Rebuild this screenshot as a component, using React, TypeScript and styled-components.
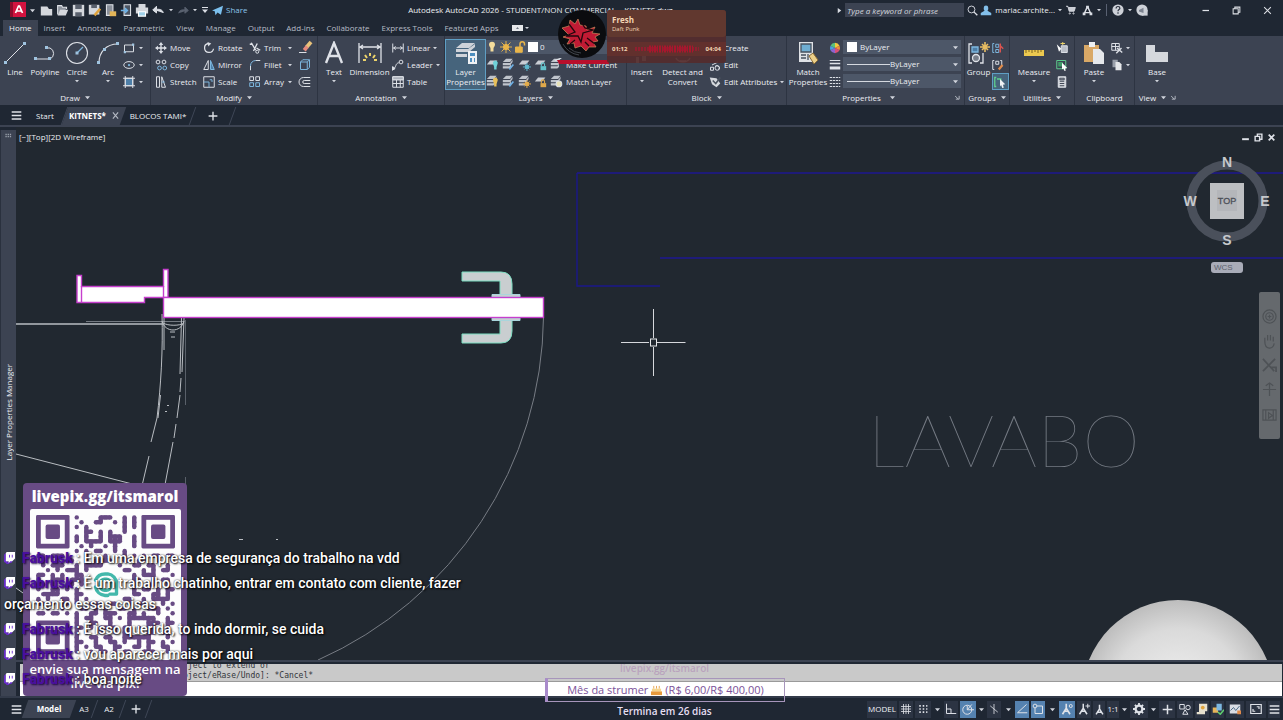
import React from 'react';
import styled, { createGlobalStyle, css } from 'styled-components';

const UI = '"Open Sans", "Noto Sans", sans-serif';
const C = {
  frame: '#1f2733',
  panel: '#3c4352',
  canvas: '#212830',
  field: '#4d5768',
  text: '#eceef2',
  dim: '#b7bcc6',
  blue: '#7db8e0',
  active: '#5582b0',
};

const Global = createGlobalStyle`
  *, *::before, *::after { box-sizing: border-box; }
  body { margin: 0; background: ${C.frame}; }
  button, input, select { font: inherit; color: inherit; border: 0; background: none; padding: 0; margin: 0; }
  svg { display: block; flex: none; }
`;

/* ---------- icons ---------- */

type IconProps = { size?: number; children: React.ReactNode; color?: string; box?: number };
const Icon = ({ size = 12, box = 16, color = '#dfe2e8', children }: IconProps) => (
  <svg width={size} height={size} viewBox={`0 0 ${box} ${box}`} fill="none" stroke={color} strokeWidth={1.3} aria-hidden="true">
    {children}
  </svg>
);

const Caret = ({ size = 5 }: { size?: number }) => (
  <svg width={size} height={size} viewBox="0 0 6 6" aria-hidden="true">
    <path d="M0 1.5h6L3 5z" fill="#d0d4dc" />
  </svg>
);

const Launcher = () => (
  <svg width="5" height="5" viewBox="0 0 6 6" fill="none" stroke="#c5cad3" aria-hidden="true">
    <path d="M0 1l4 4M5 1v4H1" />
  </svg>
);

const LayerIcon = ({ badge }: { badge: React.ReactNode }) => (
  <Icon size={13}>
    <path d="M5 3h9l-4 5H1z" fill="#c9cdd4" stroke="none" />
    {badge}
  </Icon>
);
const StackIcon = ({ badge }: { badge: React.ReactNode }) => (
  <Icon size={13}>
    <path d="M5 1h8l-3 4H1zM1 6h9l3-4v3l-3 4H1zM1 10h8l2-2v3l-2 2H1z" fill="#bfc4cc" stroke="none" />
    {badge}
  </Icon>
);
const bulb = (c: string) => <path d="M9 8a3 3 0 1 1 5 0l-1 3v3h-3v-3z" fill={c} stroke="none" />;
const wand = (c: string) => <path d="M14 8l-5 6" stroke={c} strokeWidth="2" />;
const sunBadge = (c: string) => (
  <g stroke={c} strokeWidth="1.2">
    <circle cx="11" cy="11" r="2" fill={c} />
    <path d="M11 6v10M6 11h10M8 8l6 6M14 8l-6 6" />
  </g>
);
const lockBadge = (c: string) => (
  <g>
    <path d="M9 10V8a2 2 0 0 1 4 0v2" stroke={c} />
    <rect x="8" y="10" width="7" height="5" fill={c} stroke="none" />
  </g>
);

/* ---------- title bar ---------- */

const Page = styled.div`
  position: relative;
  display: flex;
  flex-direction: column;
  min-height: 100vh;
  overflow: hidden;
  background: ${C.frame};
  color: ${C.text};
  font: 8px/12px ${UI};
`;

const TitleBar = styled.header`
  display: flex;
  align-items: center;
  height: 20px;
`;

const QuickAccess = styled.div`
  display: flex;
  align-items: center;
  padding-left: 10px;
`;

const ToolCell = styled.button<{ $w?: number }>`
  display: flex;
  flex: none;
  align-items: center;
  justify-content: center;
  width: ${(p) => p.$w ?? 16}px;
  height: 16px;
`;

const ShareButton = styled.button`
  display: flex;
  align-items: center;
  gap: 3px;
  margin-left: 2px;
  color: #8cc4ea;
`;

const WindowTitle = styled.div`
  flex: 1;
  min-width: 0;
  text-align: center;
  white-space: nowrap;
  overflow: hidden;
`;

const SearchField = styled.input`
  width: 119px;
  height: 14px;
  padding: 0 2px;
  background: ${C.panel};
  &::placeholder { color: #d3d7de; font-style: italic; opacity: 1; }
`;

const Account = styled.button`
  display: flex;
  align-items: center;
  gap: 3px;
  height: 16px;
`;

const Separator = styled.span`
  width: 1px;
  height: 12px;
  margin: 0 3px;
  background: #596172;
`;

const WindowControls = styled.div`
  display: flex;
  margin-left: 40px;
`;

/* ---------- ribbon ---------- */

const TabRow = styled.nav`
  display: flex;
  align-items: stretch;
  height: 16px;
  padding-left: 3px;
`;

const RibbonTab = styled.button<{ $on?: boolean }>`
  padding: 2px 6px;
  line-height: 12px;
  color: ${(p) => (p.$on ? '#f4f5f7' : C.dim)};
  background: ${(p) => (p.$on ? C.panel : 'transparent')};
`;

const Ribbon = styled.section`
  display: flex;
  height: 69px;
  overflow: hidden;
  background: ${C.panel};
`;

const Panel = styled.div<{ $w: number; $last?: boolean }>`
  display: flex;
  flex: none;
  flex-direction: column;
  width: ${(p) => p.$w}px;
  border-right: ${(p) => (p.$last ? '0' : '1px solid #2d3442')};
`;

const PanelBody = styled.div<{ $pad?: number }>`
  display: flex;
  height: 54px;
  padding: 3px 0 0 ${(p) => p.$pad ?? 3}px;
`;

const PanelLabel = styled.div`
  display: flex;
  align-items: center;
  justify-content: center;
  gap: 5px;
  height: 15px;
`;

const LabelEnd = styled.span`
  margin-left: auto;
  padding-right: 4px;
`;

const BigTool = styled.button<{ $w: number; $on?: boolean }>`
  position: relative;
  display: flex;
  flex: none;
  flex-direction: column;
  align-items: center;
  width: ${(p) => p.$w}px;
  height: 51px;
  padding-top: 2px;
  line-height: 10px;
  white-space: nowrap;
  ${(p) =>
    p.$on &&
    css`
      background: #46647c;
      box-shadow: inset 0 0 0 1px #5f9fc4;
    `}
  > span { margin: 2px 0; }
`;

const Column = styled.div<{ $w: number }>`
  display: flex;
  flex: none;
  flex-direction: column;
  width: ${(p) => p.$w}px;
`;

const SmallTool = styled.button<{ $on?: boolean; $spread?: boolean }>`
  display: flex;
  align-items: center;
  gap: 3px;
  height: 17px;
  padding-right: 4px;
  white-space: nowrap;
  ${(p) => p.$on && css`
    padding: 0 2px;
    background: #46647c;
    box-shadow: inset 0 0 0 1px #5f9fc4;
  `}
  > svg:nth-of-type(2) { margin-left: ${(p) => (p.$spread ? 'auto' : '0')}; }
`;

const LayerRow = styled.div`
  display: flex;
  align-items: center;
  gap: 3px;
  height: 17px;
  white-space: nowrap;
`;

const LayerCombo = styled.div`
  display: flex;
  align-items: center;
  gap: 2px;
  height: 14px;
  width: 132px;
  margin: 1px 0 2px;
  background: ${C.field};
`;

const Combo = styled.label`
  display: flex;
  align-items: center;
  gap: 3px;
  width: 118px;
  height: 14px;
  margin: 1px 0 2px;
  padding: 0 3px 0 4px;
  background: ${C.field};
`;

const Select = styled.select`
  flex: 1;
  min-width: 0;
  height: 14px;
  appearance: none;
  outline: 0;
`;

const Swatch = styled.span`
  flex: none;
  width: 10px;
  height: 10px;
  background: #fff;
`;

const LineSample = styled.span`
  width: 43px;
  height: 1px;
  margin-right: -3px;
  background: #d5d9e0;
`;

/* ---------- file tabs ---------- */

const FileTabs = styled.nav`
  display: flex;
  align-items: center;
  height: 20px;
  padding: 1px 0 0 7px;
`;

const FileTab = styled.button<{ $on?: boolean; $w: number }>`
  position: relative;
  display: flex;
  align-items: center;
  justify-content: center;
  gap: 6px;
  width: ${(p) => p.$w}px;
  height: 18px;
  z-index: 0;
  white-space: nowrap;
  font-weight: ${(p) => (p.$on ? 'bold' : 'normal')};
  color: ${(p) => (p.$on ? '#fff' : C.text)};
  &::before {
    content: '';
    position: absolute;
    inset: 0;
    z-index: -1;
    transform: skewX(-20deg);
    background: ${(p) => (p.$on ? C.panel : 'transparent')};
    border-right: ${(p) => (p.$on ? '0' : '1px solid #3f4757')};
  }
`;

/* ---------- workspace ---------- */

const Workspace = styled.main`
  display: flex;
  flex: 1;
  border-top: 2px solid ${C.panel};
`;

const Palette = styled.aside`
  display: flex;
  flex: none;
  flex-direction: column;
  align-items: center;
  gap: 224px;
  width: 16px;
  margin-top: 3px;
  padding-top: 3px;
  border-left: 1px solid #2a313e;
  background: ${C.panel};
`;

const PaletteTitle = styled.span`
  writing-mode: vertical-rl;
  transform: rotate(180deg);
  white-space: nowrap;
`;

const Center = styled.div`
  display: flex;
  flex: 1;
  flex-direction: column;
  min-width: 0;
`;

const Canvas = styled.div`
  position: relative;
  display: flex;
  flex: 1;
  justify-content: space-between;
  align-items: flex-start;
  overflow: hidden;
  background: ${C.canvas};
`;

const Drawing = styled.svg`
  position: absolute;
  inset: 0;
  width: 100%;
  height: 100%;
`;

const ViewControls = styled.div`
  display: flex;
  padding: 4px 0 0 3px;
  z-index: 1;
`;

const DocControls = styled.div`
  display: flex;
  gap: 4px;
  padding: 6px 7px 0 0;
  z-index: 1;
`;

const ViewCube = styled.div`
  position: absolute;
  top: 28px;
  right: 11px;
  display: flex;
  flex-direction: column;
  align-items: center;
  gap: 13px;
`;

const Wcs = styled.button`
  width: 32px;
  height: 11px;
  padding-left: 3px;
  border-radius: 3px;
  background: #a9acb8;
  color: #5c616c;
  font: 8px/11px "Liberation Sans", sans-serif;
  text-align: left;
`;

const NavBar = styled.div`
  position: absolute;
  top: 165px;
  right: 3px;
  display: flex;
  flex-direction: column;
  align-items: center;
  justify-content: space-evenly;
  width: 21px;
  height: 147px;
  padding: 8px 0;
  border-radius: 2px;
  background: #65696d;
`;

const Command = styled.section`
  border-top: 2px solid ${C.panel};
  padding: 2px 1px 0 4px;
`;

const History = styled.div`
  height: 18px;
  overflow: hidden;
  padding-left: 163px;
  border-bottom: 1px solid #9a9a9a;
  background: #c9c9c9;
  color: #33363b;
  font: 8px/10px "DejaVu Sans Mono", monospace;
  white-space: pre;
  display: flex;
  flex-direction: column;
  justify-content: flex-end;
  > span { flex: none; }
`;

const CommandInput = styled.input`
  display: block;
  width: 100%;
  height: 14px;
  background: #fff;
  outline: 0;
  color: #222;
`;

/* ---------- status bar ---------- */

const StatusBar = styled.footer`
  display: flex;
  align-items: center;
  justify-content: space-between;
  height: 24px;
  padding: 0 2px 0 7px;
  border-top: 2px solid #333b4a;
`;

const StatusGroup = styled.div`
  display: flex;
  align-items: center;
`;

const StatusCell = styled.button<{ $w: number; $on?: boolean; $bare?: boolean }>`
  display: flex;
  align-items: center;
  justify-content: center;
  width: ${(p) => p.$w}px;
  height: 17px;
  border: 0 solid ${C.frame};
  border-width: 0 1px;
  background: ${(p) => (p.$on ? C.active : p.$bare ? 'transparent' : '#2c3443')};
  color: #f0f2f5;
`;

/* ---------- stream overlays ---------- */

const Player = styled.div`
  position: absolute;
  z-index: 3;
  top: 10px;
  left: 557px;
  display: flex;
`;

const Track = styled.div`
  display: flex;
  flex-direction: column;
  width: 119px;
  height: 53px;
  margin-left: -2px;
  border-radius: 3px;
  background: rgba(84, 44, 44, 0.93);
  font: 6px/9px "Open Sans", sans-serif;
  color: #f3d6b4;
`;

const TrackHead = styled.div`
  display: flex;
  flex-direction: column;
  height: 27px;
  padding: 5px;
  border-radius: 3px;
  background: #61382f;
  > strong { font-size: 8px; line-height: 10px; }
`;

const TrackTime = styled.div`
  display: flex;
  align-items: center;
  justify-content: space-between;
  height: 14px;
  margin-top: 5px;
  padding: 0 5px;
  background: #62302d;
  font-weight: bold;
`;

const PixCard = styled.div`
  position: absolute;
  z-index: 2;
  left: 23px;
  bottom: 24px;
  display: flex;
  flex-direction: column;
  align-items: center;
  width: 164px;
  height: 213px;
  border-radius: 4px;
  background: #684b84;
  color: #fff;
  font: 600 13px/14px "Open Sans", sans-serif;
  text-align: center;
  > strong { font-size: 15px; line-height: 26px; white-space: nowrap; }
  > p { width: 164px; margin: 2px 0 0; white-space: nowrap; }
`;

const QrBox = styled.div`
  padding: 6px;
  border-radius: 2px;
  background: #fdfdfd;
`;

const Chat = styled.ul`
  position: absolute;
  z-index: 4;
  left: 4px;
  bottom: 30px;
  display: flex;
  flex-direction: column;
  gap: 4px;
  width: 480px;
  margin: 0;
  padding: 0;
  list-style: none;
  color: #fff;
  font: 500 14px/21px Roboto, sans-serif;
  text-shadow: 1px 1px 2px #000, 0 0 2px rgba(0, 0, 0, 0.7);
  > li > svg { display: inline-block; vertical-align: -1px; margin-right: 7px; }
`;

const Nick = styled.b`
  color: #4a0f9e;
  font-weight: 900;
  text-shadow: 1px 1px 2px #1a0440;
`;

const Goal = styled.div`
  position: absolute;
  z-index: 3;
  left: 50%;
  bottom: 3px;
  display: flex;
  flex-direction: column;
  align-items: center;
  width: 240px;
  margin-left: -97px;
  font: 600 10px/12px "Open Sans", sans-serif;
  color: #e6dff2;
`;

const GoalLink = styled.a`
  margin-bottom: 4px;
  font-size: 10px;
  color: #b9a3bd;
  text-decoration: none;
`;

const GoalBar = styled.div`
  display: flex;
  align-items: center;
  justify-content: center;
  gap: 3px;
  width: 100%;
  height: 24px;
  margin-bottom: 3px;
  border: 1px solid #a795bb;
  border-left: 3px solid #a98bcb;
  color: #7b5299;
  font-size: 11px;
  font-weight: 500;
  white-space: nowrap;
`;

/* ---------- QR code ---------- */

const QR_ROWS = [
  '........#....###..#.#........',
  '.........#..##..#.#.#........',
  '........#.#.......#.#........',
  '..........##.#.#..#..........',
  '........#.#..#.###..#........',
  '........#.####.###..#........',
  '.........#.#..#.#...#........',
  '........#.#.##..#.#..........',
  '##.###....#...#...#.#.#.##.##',
  '.#..#.##..#.####..##.##..#..#',
  '.#.###..#.####...#..##.##..#.',
  '..#.#.###.#.......##..#.#.##.',
  '##.#.#..##..........#.###...#',
  '#..###.###..........##..#.##.',
  '##.#..##.#..........#..##..#.',
  '#..##.#.#...........#.##.#.##',
  '.####...##..........##..##.#.',
  '#.#..##.#.#.......##..#.####.',
  '##.#.##.#..###.##..#.##...#.#',
  '..#..#...##.#.#..##.#..###.#.',
  '##.##.#.#..##.###..##.#..#..#',
  '........#.##..##.#.######..#.',
  '........#..##..#...#...###.##',
  '........##.#.####.##.#.##..#.',
  '........#.#..#..#.##...##.##.',
  '........#..##.##..######...#.',
  '........##..#..##.#..#.##.#.#',
  '........#.#.##..##..##.#..##.',
  '........#..#.##.#.##..###..#.',
];

const QrCode = () => {
  const on = (r: number, c: number) => QR_ROWS[r]?.[c] === '#';
  const marks: React.ReactNode[] = [];
  QR_ROWS.forEach((row, r) =>
    row.split('').forEach((ch, c) => {
      if (ch !== '#') return;
      const key = `${r}-${c}`;
      marks.push(<circle key={key} cx={c * 10 + 5} cy={r * 10 + 5} r="4.6" />);
      if (on(r, c + 1)) marks.push(<rect key={key + 'h'} x={c * 10 + 5} y={r * 10 + 0.4} width="10" height="9.2" />);
      if (on(r + 1, c)) marks.push(<rect key={key + 'v'} x={c * 10 + 0.4} y={r * 10 + 5} width="9.2" height="10" />);
    }),
  );
  const finder = (x: number, y: number) => (
    <g key={`${x}/${y}`}>
      <rect x={x} y={y} width="70" height="70" fill="#684b84" rx="3" />
      <rect x={x + 10} y={y + 10} width="50" height="50" fill="#fdfdfd" />
      <rect x={x + 20} y={y + 20} width="30" height="30" fill="#684b84" rx="4" />
    </g>
  );
  return (
    <svg width="139" height="139" viewBox="0 0 290 290" fill="#684b84" role="img" aria-label="QR code">
      {marks}
      {finder(0, 0)}
      {finder(220, 0)}
      {finder(0, 220)}
      <g fill="none" stroke="#43b8ab" strokeWidth="7" strokeLinecap="round" strokeLinejoin="round">
        <path d="M124 136a22 22 0 0 1 20-13h6a20 20 0 0 1 18 20v22h-14" />
        <path d="M124 150a22 22 0 0 0 20 18h6" />
        <rect x="134" y="134" width="22" height="23" rx="9" />
      </g>
    </svg>
  );
};

/* ---------- view cube ---------- */

const Compass = () => (
  <svg width="90" height="94" viewBox="0 0 90 94" fontFamily="Liberation Sans, sans-serif" fontWeight="bold" textAnchor="middle">
    <circle cx="45" cy="46" r="36" fill="none" stroke="#4a505b" strokeWidth="9" />
    <rect x="28" y="28" width="34" height="36" fill="#bdbfc2" />
    <rect x="35" y="35" width="20" height="21" fill="#b4b6ba" />
    <text x="45" y="49" fontSize="9" fontWeight="normal" stroke="#4b4f57" strokeWidth=".3" fill="#4b4f57">TOP</text>
    <g fontSize="14" fill="#c6c8cc">
      <text x="45" y="12">N</text>
      <text x="45" y="90">S</text>
      <text x="8" y="51">W</text>
      <text x="83" y="51">E</text>
    </g>
  </svg>
);

/* ---------- model drawing ---------- */

const ModelSpace = () => (
  <Drawing aria-hidden="true">
    <defs>
      <radialGradient id="basin" cx="50%" cy="50%" r="50%">
        <stop offset="0" stopColor="#f2f2f2" />
        <stop offset="0.7" stopColor="#dadada" />
        <stop offset="1" stopColor="#bdbdbd" />
      </radialGradient>
    </defs>
    <g transform="translate(-16 -127)" fill="none">
      <g stroke="#1e1b78" strokeWidth="2">
        <path d="M577 173H2600M660 258H2600" />
        <path d="M577 173V286H660" strokeWidth="1.400" stroke="#1b178a" />
      </g>
      <circle cx="1178" cy="696" r="96" fill="url(#basin)" />
      <text x="868" y="467" fontFamily="Lato, Inter, sans-serif" fontWeight="100" fontSize="73" fill="#747a83">LAVABO</text>

      <path d="M543.500 317A379 379 0 0 1 318 660" stroke="#777c84" />

      <g stroke="#b9bdc2">
        <path d="M16 324H163" strokeWidth="1.500" />
        <path d="M86 321.500H184" stroke="#747a82" />
        <path d="M16 454L140 486M16 588L30 598" />
        <path d="M162 314C163 350 161 385 157 418M164 318V350M157 418L151 442M160.500 395L158 418M149 456L141 490" />
        <path d="M184 318L182 372M181.500 318L180 374M181 378L180 392M180 395L177 418M176 424L174 438M173 442L164 490" />
        <path d="M185.500 320V405M185.500 477V486" stroke="#596069" />
        <path d="M162 321C165 333 181 333 184 321M163 323C168 326 180 326 184 323" />
        <path d="M170 332H175M171 337H175M167 405.500H169M165 411.500H167M239 539.500H243M276 539.500H278" />
      </g>

      <g fill="#c9ced0" stroke="#7bdcc0">
        <path d="M462 272H501Q512 272 512 284V295H500V281H462Z" />
        <path d="M462 343H501Q512 343 512 331V320H500V334H462Z" />
        <path d="M492 294.500H520V297H492ZM492 318H520V320.500H492Z" stroke="#a9d5dc" />
      </g>
      <g fill="#fff" stroke="#c63fcd" strokeWidth="1.400">
        <path d="M77 275.500H81.500V286.500H163.500V269.500H168V297.500H144.500V302.500H77Z" />
        <path d="M81.500 286V302M163.500 286V297" />
        <rect x="163.500" y="297.500" width="380" height="20" />
      </g>

      <path d="M621 342.500H649M657 342.500H685.500M653.500 309V338M653.500 347V376" stroke="#d6d8dc" />
      <rect x="650.500" y="339" width="6" height="7" stroke="#e6e8ea" />
    </g>
  </Drawing>
);

const TwitchMark = () => (
  <svg width="11" height="12" viewBox="0 0 12 13" aria-hidden="true">
    <path d="M0 3l2-2v8h2v3l3-3h2l2-2-3 5H6l-2 2-3-3H0z" fill="#6a2bd0" />
    <path d="M3 0h9v7L9 10H7l-2 2v-2H2V1z" fill="#fff" />
    <path d="M6 3v3M9 3v3" stroke="#6a2bd0" />
  </svg>
);

const MinIcon = () => <Icon size={8}><path d="M1 9h13" strokeWidth="2.500" /></Icon>;
const RestoreIcon = () => <Icon size={9}><path d="M2 5h9v9H2zM5 5V2h9v9h-3" strokeWidth="1.800" /></Icon>;
const CloseIcon = () => <Icon size={9}><path d="M2 2l12 12M14 2L2 14" strokeWidth="1.800" /></Icon>;
const PlusIcon = ({ size = 10 }: { size?: number }) => <Icon size={size}><path d="M8 1v14M1 8h14" strokeWidth="2.200" /></Icon>;
const MenuIcon = () => <Icon size={11}><path d="M1 3h14M1 8h14M1 13h14" strokeWidth="2.200" /></Icon>;

const TABS = ['Insert', 'Annotate', 'Parametric', 'View', 'Manage', 'Output', 'Add-ins', 'Collaborate', 'Express Tools', 'Featured Apps'];

const MESSAGES = [
  'Em uma empresa de segurança do trabalho na vdd',
  'É um trabalho chatinho, entrar em contato com cliente, fazer orçamento essas coisas',
  'É isso querida, to indo dormir, se cuida',
  'vou aparecer mais por aqui',
  'boa noite',
];

export default function App() {
  return (
    <Page>
      <Global />
      <TitleBar>
        <QuickAccess>
          <ToolCell aria-label="Application menu">
            <svg width="16" height="16" viewBox="0 0 16 16">
              <rect width="16" height="15" fill="#d3133f" />
              <path d="M0 0h3v15H0z" fill="#8d0c2c" />
              <path d="M5.500 11L8.500 4h1l3 7M7 9h4.500" stroke="#fff" strokeWidth="1.700" fill="none" />
            </svg>
          </ToolCell>
          <ToolCell $w={12} aria-label="Menu options"><Caret /></ToolCell>
          <ToolCell aria-label="New"><Icon size={13}><path d="M1 3h8l2 3h4v8H1z" fill="#d5d8dd" stroke="none" /></Icon></ToolCell>
          <ToolCell aria-label="Open"><Icon size={13}><path d="M2 13V2h5l1 2h5v2" fill="#8e949e" /><path d="M2 14l3-7h10l-3 7z" fill="#d5d8dd" stroke="none" /></Icon></ToolCell>
          <ToolCell aria-label="Save"><Icon size={13}><path d="M1 1h14v14H1z" fill="#d5d8dd" stroke="none" /><path d="M4 1h8v5H4zM4 10h8v5H4z" fill="#59606d" stroke="none" /></Icon></ToolCell>
          <ToolCell aria-label="Save as"><Icon size={13}><path d="M1 1h13v12H1z" fill="#d5d8dd" stroke="none" /><path d="M4 1h7v4H4z" fill="#59606d" stroke="none" /><path d="M15 6l-7 8" stroke="#e0a33c" strokeWidth="3" /></Icon></ToolCell>
          <ToolCell aria-label="Open from web"><Icon size={13}><path d="M3 1h8v13H3z" fill="#8a909b" /><path d="M7 9h8v6H7z" fill="#e2b558" stroke="none" /></Icon></ToolCell>
          <ToolCell aria-label="Save to web"><Icon size={13}><path d="M5 1h8v13H5z" fill="#4c5563" /><path d="M1 8h8M6 5l3 3-3 3" stroke="#6fb2e6" strokeWidth="2" /></Icon></ToolCell>
          <ToolCell aria-label="Plot"><Icon size={14}><path d="M4 1h8v4H4zM1 5h14v7H1z" fill="#d5d8dd" stroke="none" /><path d="M4 10h8v5H4z" fill="#9fd0e8" stroke="#fff" /></Icon></ToolCell>
          <ToolCell aria-label="Undo"><Icon size={12}><path d="M15 12c-1-5-5-5-9-5V3L1 8l5 4V9" fill="#d9dde4" /></Icon></ToolCell>
          <ToolCell $w={10} aria-label="Undo list"><Caret size={4} /></ToolCell>
          <ToolCell $w={14} aria-label="Redo"><Icon size={11} color="#59616f"><path d="M1 12c1-5 5-5 9-5V3l5 5-5 4V9" fill="#59616f" /></Icon></ToolCell>
          <ToolCell $w={10} aria-label="Redo list"><Caret size={4} /></ToolCell>
          <ToolCell $w={10} aria-label="Customize"><Icon size={8}><path d="M2 3h12" strokeWidth="2" /><path d="M2 7h12l-6 7z" fill="#d9dde4" stroke="none" /></Icon></ToolCell>
          <ShareButton>
            <Icon size={11}><path d="M0 8L16 1l-3 13-5-3-3 4-1-6z" fill="#7cc0ee" stroke="none" /></Icon>
            Share
          </ShareButton>
        </QuickAccess>
        <WindowTitle>Autodesk AutoCAD 2026 - STUDENT/NON COMMERCIAL &nbsp;&nbsp; KITNETS.dwg</WindowTitle>
        <ToolCell $w={12} aria-label="Collapse search"><Icon size={7}><path d="M4 2l8 6-8 6z" fill="#d9dde4" stroke="none" /></Icon></ToolCell>
        <SearchField placeholder="Type a keyword or phrase" aria-label="Search" />
        <ToolCell aria-label="Search"><Icon size={11}><circle cx="6.500" cy="6.500" r="5" /><path d="M10 10l5 5" strokeWidth="2" /></Icon></ToolCell>
        <Account>
          <Icon size={12}><path d="M5 5a3 3 0 1 1 6 0v2l-1 2 5 3v3H1v-3l5-3-1-2z" fill="#83bfea" stroke="none" /></Icon>
          mariac.archite...
          <Caret size={4} />
        </Account>
        <ToolCell $w={18} aria-label="Cart"><Icon size={10}><path d="M0 2h3l2 8h8l2-6H4" fill="#c9cdd4" /><circle cx="6" cy="13.500" r="1" /><circle cx="12" cy="13.500" r="1" /></Icon></ToolCell>
        <ToolCell $w={14} aria-label="Autodesk App Store"><Icon size={11}><path d="M8 2L3 13M8 2l5 11M3 11h10" strokeWidth="2" /><path d="M6 1h4v4H6zM1 11h4v4H1zM11 11h4v4h-4z" fill="#d9dde4" stroke="none" /></Icon></ToolCell>
        <ToolCell $w={9} aria-label="Store options"><Caret size={4} /></ToolCell>
        <Separator />
        <ToolCell $w={16} aria-label="Help"><Icon size={12}><circle cx="8" cy="8" r="7.500" fill="#cdd1d8" stroke="none" /><path d="M5.500 6c0-4 5-3 5-.500 0 2-2.500 1.500-2.500 4M8 11v2" stroke="#2a313e" strokeWidth="1.600" /></Icon></ToolCell>
        <ToolCell $w={8} aria-label="Help options"><Caret size={4} /></ToolCell>
        <ToolCell $w={16} aria-label="Announcements"><Icon size={12}><circle cx="8" cy="8" r="7.500" fill="#cdd1d8" stroke="none" /><path d="M8 8h7.500v7.500H8z" fill="#cdd1d8" stroke="none" /><path d="M4 8l6-3v7l-6-2z" fill="#7b828f" stroke="none" /></Icon></ToolCell>
        <WindowControls>
          <ToolCell $w={31} aria-label="Minimize"><MinIcon /></ToolCell>
          <ToolCell $w={31} aria-label="Restore"><RestoreIcon /></ToolCell>
          <ToolCell $w={31} aria-label="Close"><CloseIcon /></ToolCell>
        </WindowControls>
      </TitleBar>

      <TabRow>
        <RibbonTab $on>Home</RibbonTab>
        {TABS.map((t) => <RibbonTab key={t}>{t}</RibbonTab>)}
        <ToolCell $w={32} aria-label="Ribbon display">
          <svg width="17" height="8" viewBox="0 0 17 8"><rect y="1" width="11" height="6" fill="#e6e8eb" /><path d="M4 5l1.500-2L7 5z" fill="#6f7683" /><path d="M13 3h4l-2 2z" fill="#d0d4dc" /></svg>
        </ToolCell>
      </TabRow>

      <Ribbon>
        <Panel $w={151}>
          <PanelBody $pad={1}>
            <BigTool $w={28}><Icon size={24} box={24}><path d="M2 22L22 2" strokeWidth="1" /><path d="M1 20h3v3H1zM20 1h3v3h-3z" fill="#9fc3df" stroke="none" /></Icon><span>Line</span></BigTool>
            <BigTool $w={32}><Icon size={24} box={24}><path d="M2 18h15a6 6 0 0 0 0-11l-4 0" strokeWidth="1" /><path d="M1 16h3v3H1zM15 16h3v3h-3zM12 5h3v3h-3z" fill="#9fc3df" stroke="none" /></Icon><span>Polyline</span></BigTool>
            <BigTool $w={32}><Icon size={24} box={24}><circle cx="12" cy="12" r="10.500" strokeWidth="1.100" /><path d="M12 12l6-6" stroke={C.blue} /><path d="M10.500 10.500h3v3h-3z" fill="#9fc3df" stroke="none" /></Icon><span>Circle</span><Caret size={4} /></BigTool>
            <BigTool $w={30}><Icon size={24} box={24}><path d="M3 22C3 11 10 3 22 3" strokeWidth="1.100" /><path d="M1 20h3v3H1zM7 7h3v3H7zM20 1h3v3h-3z" fill="#9fc3df" stroke="none" /></Icon><span>Arc</span><Caret size={4} /></BigTool>
            <Column $w={24}>
              <SmallTool $spread aria-label="Rectangle"><Icon><path d="M2 4h12v9H2z" /><path d="M1 12h3v3H1zM12 2h3v3h-3z" fill="#9fc3df" stroke="none" /></Icon><Caret size={4} /></SmallTool>
              <SmallTool $spread aria-label="Ellipse"><Icon><ellipse cx="8" cy="8" rx="7" ry="4.500" /><circle cx="8" cy="8" r="1.500" fill={C.blue} stroke="none" /></Icon><Caret size={4} /></SmallTool>
              <SmallTool $spread aria-label="Hatch"><Icon><path d="M3 3h10v10H3z" fill="#4e7fa8" /><path d="M0 3h16M0 13h16M3 0v16M13 0v16" /></Icon><Caret size={4} /></SmallTool>
            </Column>
          </PanelBody>
          <PanelLabel>Draw <Caret /></PanelLabel>
        </Panel>

        <Panel $w={167}>
          <PanelBody $pad={4}>
            <Column $w={48}>
              <SmallTool><Icon><path d="M8 2v12M2 8h12" strokeWidth="1.800" /><path d="M8 0l3 4H5zM8 16l3-4H5zM0 8l4-3v6zM16 8l-4-3v6z" fill="#d9dde4" stroke="none" /></Icon>Move</SmallTool>
              <SmallTool><Icon><circle cx="4" cy="4" r="2.500" /><circle cx="12" cy="4" r="2.500" /><circle cx="6" cy="12" r="2.500" stroke={C.blue} /><circle cx="13" cy="12" r="2.500" stroke={C.blue} /></Icon>Copy</SmallTool>
              <SmallTool><Icon><path d="M2 1h4v14H2zM9 1l5 14H9z" /><path d="M9 8h4" stroke={C.blue} /></Icon>Stretch</SmallTool>
            </Column>
            <Column $w={46}>
              <SmallTool><Icon><path d="M7 2a6 6 0 1 0 7 7" strokeWidth="1.700" /><path d="M6 0l5 2-4 4z" fill="#d9dde4" stroke="none" /></Icon>Rotate</SmallTool>
              <SmallTool><Icon><path d="M7 2L1 14h6z" /><path d="M10 2l5 12h-5z" stroke={C.blue} fill="#4e7fa8" /></Icon>Mirror</SmallTool>
              <SmallTool><Icon><path d="M1 1h14v14H1z" /><path d="M1 8h7v7M9 5h3v3" stroke={C.blue} /></Icon>Scale</SmallTool>
            </Column>
            <Column $w={47}>
              <SmallTool $spread><Icon><path d="M3 1l6 10M11 2L6 12M1 3h4M10 8l5 3" strokeWidth="1.800" /><circle cx="11" cy="13" r="2" /></Icon>Trim<Caret size={4} /></SmallTool>
              <SmallTool $spread><Icon><path d="M2 15V9" /><path d="M2 9c0-4 3-7 7-7" stroke={C.blue} /><path d="M9 2h6" /></Icon>Fillet<Caret size={4} /></SmallTool>
              <SmallTool $spread><Icon><path d="M1 1h5v5H1zM9 1h5v5H9z" /><path d="M1 9h5v5H1zM9 9h5v5H9z" stroke={C.blue} /></Icon>Array<Caret size={4} /></SmallTool>
            </Column>
            <Column $w={21}>
              <SmallTool $spread aria-label="Erase"><Icon size={18} box={24}><path d="M20 4l-6 7" stroke="#e8c27a" strokeWidth="5" /><path d="M15 10l-4 5" stroke="#e68a7c" strokeWidth="5" /><path d="M4 18h10" /></Icon></SmallTool>
              <SmallTool aria-label="Explode"><Icon size={18} box={24} color={C.blue}><path d="M6 8h9v10H6zM6 8l3-3h9l-3 3M18 5v10l-3 3" /></Icon></SmallTool>
              <SmallTool aria-label="Offset"><Icon size={18} box={24}><path d="M19 6h-9a6 6 0 0 0 0 12h9M19 10h-8a2 2 0 0 0 0 4h8" /></Icon></SmallTool>
            </Column>
          </PanelBody>
          <PanelLabel>Modify <Caret /></PanelLabel>
        </Panel>

        <Panel $w={127}>
          <PanelBody>
            <BigTool $w={26}><Icon size={24} box={24}><path d="M4 22L12 2l8 20M7 15h10" strokeWidth="2.400" /></Icon><span>Text</span><Caret size={4} /></BigTool>
            <BigTool $w={45}><Icon size={24} box={24}><path d="M1 2v20M23 2v20M2 6h20M5 4L2 6l3 2M19 4l3 2-3 2" /><path d="M12 12v3M7 14l2 3M17 14l-2 3M5 19h3M19 19h-3" stroke="#ecd36a" strokeWidth="2" /></Icon><span>Dimension</span></BigTool>
            <Column $w={49}>
              <SmallTool $spread><Icon><path d="M1 2v12M15 2v12M2 8h12M5 6L2 8l3 2M11 6l3 2-3 2" /></Icon>Linear<Caret size={4} /></SmallTool>
              <SmallTool $spread><Icon><circle cx="12" cy="4" r="2.500" /><path d="M9 5C4 6 6 11 2 13" /><path d="M0 15l1-5 3 3z" fill="#d9dde4" /></Icon>Leader<Caret size={4} /></SmallTool>
              <SmallTool><Icon><path d="M1 1h14v14H1zM1 5h14M1 10h14M6 5v10M11 5v10" /><path d="M1 1h14v4H1z" fill="#aab0ba" /></Icon>Table</SmallTool>
            </Column>
          </PanelBody>
          <PanelLabel>Annotation <Caret /></PanelLabel>
        </Panel>

        <Panel $w={182}>
          <PanelBody $pad={0}>
            <BigTool $w={41} $on>
              <Icon size={24} box={24}><path d="M8 2h13l-6 5H2zM2 8h12l7-5v3l-6 5H2zM2 13h11v3H2z" fill="#cfd3d9" stroke="none" /><path d="M14 10h9v13h-9z" fill="#eef1f4" stroke="none" /><path d="M16 12h5v3h-5zM16 17h2v4h-2zM20 17h1v4h-1z" fill="#4e8fbf" stroke="none" /></Icon>
              <span>Layer<br />Properties</span>
            </BigTool>
            <Column $w={140}>
              <LayerCombo>
                <Icon size={12}><path d="M4 5a4 4 0 1 1 8 0c0 2-2 3-2 5v4H6v-4c0-2-2-3-2-5z" fill="#f3dc9c" stroke="none" /></Icon>
                <Icon size={12} color="#e9b54a"><circle cx="8" cy="8" r="3.500" fill="#e9b54a" /><path d="M8 0v16M0 8h16M2 2l12 12M14 2L2 14" /></Icon>
                <Icon size={12} color="#e9b54a"><path d="M8 8V4a3 3 0 0 1 6 0v2" strokeWidth="2" /><path d="M2 8h9v7H2z" fill="#e9b54a" /></Icon>
                <Swatch />
                <Select aria-label="Layer"><option>0</option></Select>
              </LayerCombo>
              <LayerRow>
                <LayerIcon badge={bulb('#6fd0d8')} /><StackIcon badge={wand('#6fb2e6')} /><LayerIcon badge={sunBadge('#5fb9cf')} /><LayerIcon badge={lockBadge('#63c3cc')} /><StackIcon badge={<path d="M6 3l8-3" />} />
                <SmallTool>Make Current</SmallTool>
              </LayerRow>
              <LayerRow>
                <StackIcon badge={bulb('#e9c05a')} /><StackIcon badge={wand('#6fb2e6')} /><StackIcon badge={sunBadge('#e3ac4a')} /><LayerIcon badge={lockBadge('#e0a84a')} /><StackIcon badge={<circle cx="11" cy="11" r="3.500" fill="#e8e2b8" />} />
                <SmallTool>Match Layer</SmallTool>
              </LayerRow>
            </Column>
          </PanelBody>
          <PanelLabel>Layers <Caret /></PanelLabel>
        </Panel>

        <Panel $w={160}>
          <PanelBody $pad={0}>
            <BigTool $w={29}><Icon size={24} box={24}><path d="M5 2h14v3H5zM6 16h3v6H6zM12 14h4v6h-4z" fill="#c9cdd4" stroke="none" /></Icon><span>Insert</span><Caret size={4} /></BigTool>
            <BigTool $w={53}><Icon size={24} box={24}><path d="M5 17c2 5 12 5 14 0M9 20h6" /></Icon><span>Detect and<br />Convert</span></BigTool>
            <Column $w={77}>
              <SmallTool><Icon><path d="M2 3h9v10H2z" fill="#bfc4cc" /></Icon>Create</SmallTool>
              <SmallTool><Icon><path d="M2 11h4v4H2zM8 10a3 3 0 1 1 5 4M4 8l8-4" /><circle cx="11" cy="12" r="3" /></Icon>Edit</SmallTool>
              <SmallTool $spread><Icon><path d="M1 2l9 1 5 7-5 5-6-4z" fill="#d5d8dd" stroke="none" /><path d="M5 6l4 4 6-8" stroke="#4b535f" strokeWidth="2" /></Icon>Edit Attributes<Caret size={4} /></SmallTool>
            </Column>
          </PanelBody>
          <PanelLabel>Block <Caret /></PanelLabel>
        </Panel>

        <Panel $w={178}>
          <PanelBody $pad={0}>
            <BigTool $w={42}>
              <Icon size={24} box={24}><path d="M3 1h14v20H3z" fill="#dfe2e6" stroke="none" /><path d="M5 3h10v8H5z" fill="#6faed2" stroke="#46505e" /><path d="M5 14h5M5 17h5M12 13v6" stroke="#46505e" /><path d="M13 15l4-3 5 7-4 4z" fill="#ecd089" stroke="#8a6b35" strokeWidth="1" /></Icon>
              <span>Match<br />Properties</span>
            </BigTool>
            <Column $w={14}>
              <SmallTool aria-label="Color"><Icon><g stroke="none"><path d="M8 8V1a7 7 0 0 1 6 4z" fill="#f0c93c" /><path d="M8 8l6-3a7 7 0 0 1 0 6z" fill="#f08a3c" /><path d="M8 8l6 3a7 7 0 0 1-6 4z" fill="#d94f7a" /><path d="M8 8v7a7 7 0 0 1-6-4z" fill="#8e63d0" /><path d="M8 8l-6 3a7 7 0 0 1 0-6z" fill="#4d9be0" /><path d="M8 8L2 5a7 7 0 0 1 6-4z" fill="#58c07a" /></g></Icon></SmallTool>
              <SmallTool aria-label="Lineweight"><Icon><path d="M1 2h14" /><path d="M1 6h14" strokeWidth="2" /><path d="M1 12h14" strokeWidth="4" /></Icon></SmallTool>
              <SmallTool aria-label="Linetype"><Icon><path d="M1 2h14M1 6h14M1 10h14M1 14h14" strokeDasharray="3 1" /></Icon></SmallTool>
            </Column>
            <Column $w={118}>
              <Combo><Swatch /><Select aria-label="Object color"><option>ByLayer</option></Select><Caret /></Combo>
              <Combo><LineSample /><Select aria-label="Object lineweight"><option>ByLayer</option></Select><Caret /></Combo>
              <Combo><LineSample /><Select aria-label="Object linetype"><option>ByLayer</option></Select><Caret /></Combo>
            </Column>
          </PanelBody>
          <PanelLabel><LabelEnd>Properties</LabelEnd><Caret /><LabelEnd><Launcher /></LabelEnd></PanelLabel>
        </Panel>

        <Panel $w={45}>
          <PanelBody $pad={0}>
            <BigTool $w={27}><Icon size={24} box={24}><path d="M5 3H2v19h3M16 12v10h-3" /><path d="M5 6h6v5H5z" fill="#4e7fa8" stroke={C.blue} /><circle cx="9" cy="17" r="3.500" fill="#777e8a" /><path d="M18 1v10M13 6h10M15 3l6 6M21 3l-6 6" stroke="#e8bd62" strokeWidth="1.600" /></Icon><span>Group</span></BigTool>
            <Column $w={17}>
              <SmallTool aria-label="Ungroup"><Icon><path d="M3 2H1v12h2M5 3h4v4H5zM5 10h4v4H5z" stroke={C.blue} /><path d="M11 5l4 4M11 2v12" stroke="#d9534f" strokeWidth="2" /></Icon></SmallTool>
              <SmallTool aria-label="Group edit"><Icon><path d="M3 2H1v12h2M11 2h2v8M5 3h4v4H5z" /><path d="M14 8l-5 6" stroke="#e08b4a" strokeWidth="3" /></Icon></SmallTool>
              <SmallTool $on aria-label="Group selection"><Icon><path d="M3 2H1v12h2M4 4h5v8" stroke="#5fcf8f" strokeWidth="1.700" /><path d="M8 4l7 7-3 .500 1 4-2 .500-1.500-4L8 14z" fill="#eef1f4" stroke="none" /></Icon></SmallTool>
            </Column>
          </PanelBody>
          <PanelLabel>Groups <Caret /></PanelLabel>
        </Panel>

        <Panel $w={65}>
          <PanelBody $pad={2}>
            <BigTool $w={44}><Icon size={24} box={24}><path d="M2 9h20v6H2z" fill="#ecc94f" stroke="none" /><path d="M4 9v3M7 9v2M10 9v3M13 9v2M16 9v3M19 9v2" stroke="#7c6420" strokeWidth="1" /></Icon><span>Measure</span><Caret size={4} /></BigTool>
            <Column $w={18}>
              <SmallTool $spread aria-label="Quick select"><Icon><path d="M7 5h8v9H7z" fill="#b9bec7" /><path d="M1 3l6 6-3 4z" fill="#fff" stroke="none" /><path d="M9 0v4M6 2h6" stroke="#ecd36a" /></Icon></SmallTool>
              <SmallTool aria-label="Select all"><Icon><path d="M1 2h12v11H1z" stroke="#5fcf8f" /><path d="M3 4h6v6H3z" fill="#3f9c68" stroke="none" /><path d="M8 5l7 7-3 .500 1 3H11l-1-3-2 1z" fill="#fff" stroke="none" /></Icon></SmallTool>
              <SmallTool aria-label="Calculator"><Icon><path d="M3 1h10v14H3z" fill="#d5d8dd" /><path d="M5 3h6v2H5zM5 7h6M5 10h6M5 13h6" stroke="#3c4352" /></Icon></SmallTool>
            </Column>
          </PanelBody>
          <PanelLabel>Utilities <Caret /></PanelLabel>
        </Panel>

        <Panel $w={60}>
          <PanelBody $pad={2}>
            <BigTool $w={34}><Icon size={24} box={24}><path d="M2 4h15v17H2z" fill="#d9a866" stroke="none" /><path d="M7 1h6v5H7z" fill="#eef1f4" stroke="none" /><path d="M11 8h7l4 4v11H11z" fill="#e6e8eb" stroke="none" /></Icon><span>Paste</span><Caret size={4} /></BigTool>
            <Column $w={22}>
              <SmallTool aria-label="Cut"><Icon><path d="M1 2h10v9H1zM1 6h10M6 2v9" /><path d="M8 8l7 6M14 8l-7 7" strokeWidth="1.800" /></Icon><Caret size={4} /></SmallTool>
              <SmallTool aria-label="Copy clip"><Icon><path d="M2 1h7v10H2z" fill="#9aa0ab" stroke="none" /><path d="M6 4h5l3 3v8H6z" fill="#e6e8eb" stroke="none" /></Icon><Caret size={4} /></SmallTool>
            </Column>
          </PanelBody>
          <PanelLabel>Clipboard</PanelLabel>
        </Panel>

        <Panel $w={45} $last>
          <PanelBody $pad={4}>
            <BigTool $w={36}><Icon size={24} box={24}><path d="M1 4h9v7h13v10H1z" fill="#d5d8dd" stroke="none" /></Icon><span>Base</span><Caret size={4} /></BigTool>
          </PanelBody>
          <PanelLabel>View <Caret /><Launcher /></PanelLabel>
        </Panel>
      </Ribbon>

      <FileTabs>
        <ToolCell $w={18} aria-label="File menu"><MenuIcon /></ToolCell>
        <FileTab $w={40}>Start</FileTab>
        <FileTab $w={58} $on>KITNETS* <Icon size={7} color={C.dim}><path d="M2 1l12 14M14 1L2 15" strokeWidth="2.500" /></Icon></FileTab>
        <FileTab $w={70}>BLOCOS TAMI*</FileTab>
        <FileTab $w={40} aria-label="New tab"><PlusIcon /></FileTab>
      </FileTabs>

      <Workspace>
        <Palette>
          <Icon size={7} color="#9aa0ab"><path d="M1 3h14M1 8h14" strokeDasharray="3 2" strokeWidth="3" /></Icon>
          <PaletteTitle>Layer Properties Manager</PaletteTitle>
        </Palette>
        <Center>
          <Canvas>
            <ModelSpace />
            <ViewControls>
              <button>[−]</button><button>[Top]</button><button>[2D Wireframe]</button>
            </ViewControls>
            <DocControls>
              <button aria-label="Minimize drawing"><Icon size={9}><path d="M2 11h12" strokeWidth="3.500" /></Icon></button>
              <button aria-label="Restore drawing"><Icon size={9}><path d="M2 6h8v8H2zM6 5V2h8v9h-3" strokeWidth="2.500" /></Icon></button>
              <button aria-label="Close drawing"><Icon size={9}><path d="M3 3l10 10M13 3L3 13" strokeWidth="3" /></Icon></button>
            </DocControls>
            <ViewCube>
              <Compass />
              <Wcs>WCS</Wcs>
            </ViewCube>
            <NavBar>
              <Icon size={15} color="#4e5256"><circle cx="8" cy="8" r="7" /><circle cx="8" cy="8" r="4" /><path d="M8 6v4M6 8h4" /></Icon>
              <Icon size={15} color="#4e5256"><path d="M3 8V4M6 7V1M9 7V1M12 8V3M3 8c0 9 9 9 10 2" /></Icon>
              <Icon size={15} color="#4e5256"><path d="M1 1l12 13M14 1L1 14M10 10h5v5" strokeWidth="1.800" /></Icon>
              <Icon size={15} color="#4e5256"><path d="M8 1v14M1 8h14M4 4l4-3 4 3" /></Icon>
              <Icon size={15} color="#4e5256"><path d="M1 3h14v11H1zM4 3v11M12 3v11M7 6l4 3-4 3z" /></Icon>
            </NavBar>
          </Canvas>
          <Command>
            <History>
              <span>{' ject to extend or'}</span>
              <span>oject/eRase/Undo]: *Cancel*</span>
            </History>
            <CommandInput aria-label="Command" />
          </Command>
        </Center>
      </Workspace>

      <StatusBar>
        <StatusGroup>
          <ToolCell $w={18} aria-label="Layout menu"><MenuIcon /></ToolCell>
          <FileTab $w={48} $on>Model</FileTab>
          <FileTab $w={22}>A3</FileTab>
          <FileTab $w={28}>A2</FileTab>
          <FileTab $w={26} aria-label="New layout"><PlusIcon /></FileTab>
        </StatusGroup>
        <StatusGroup>
          <StatusCell $w={32}>MODEL</StatusCell>
          <StatusCell $w={16} aria-label="Grid"><Icon size={10}><path d="M4 0v16M8 0v16M12 0v16M0 4h16M0 8h16M0 12h16" /></Icon></StatusCell>
          <StatusCell $w={18} aria-label="Snap"><Icon size={10}><path d="M2 3h13M2 8h13M2 13h13" strokeDasharray="2.500 3" strokeWidth="2.500" /></Icon></StatusCell>
          <StatusCell $w={11} $bare aria-label="Snap options"><Caret /></StatusCell>
          <StatusCell $w={16} aria-label="Ortho"><Icon size={12}><path d="M2 1v13h13M2 8h6v6" /></Icon></StatusCell>
          <StatusCell $w={18} $on aria-label="Polar"><Icon size={12}><circle cx="7" cy="9" r="6" /><path d="M7 9V4M7 9h9M7 9l6-7" /></Icon></StatusCell>
          <StatusCell $w={9} $bare aria-label="Polar options"><Caret /></StatusCell>
          <StatusCell $w={16} aria-label="Isodraft"><Icon size={10}><path d="M8 0v16M2 3l12 10" /></Icon></StatusCell>
          <StatusCell $w={12} $bare aria-label="Isodraft options"><Caret /></StatusCell>
          <StatusCell $w={16} $on aria-label="Object tracking"><Icon size={12}><path d="M14 2L2 13h13" /></Icon></StatusCell>
          <StatusCell $w={16} $on aria-label="Object snap"><Icon size={12}><path d="M4 4h10v10H4z" /><circle cx="4" cy="4" r="2.500" fill={C.active} /></Icon></StatusCell>
          <StatusCell $w={12} $bare aria-label="Snap list"><Caret /></StatusCell>
          <StatusCell $w={18} $on aria-label="Annotation visibility"><Icon size={12}><path d="M7 1v6L2 15M7 7l5 8M4 11h6" strokeWidth="2.200" /><circle cx="13" cy="4" r="2" /></Icon></StatusCell>
          <StatusCell $w={16} aria-label="Auto scale"><Icon size={12}><path d="M7 1v6L2 15M7 7l5 8M4 11h6" strokeWidth="2" /><path d="M13 1v6M10 4h6" /></Icon></StatusCell>
          <StatusCell $w={14} aria-label="Annotation scale"><Icon size={11}><path d="M8 1v6L3 15M8 7l5 8M5 12h6" strokeWidth="2.200" /></Icon></StatusCell>
          <StatusCell $w={14}>1:1</StatusCell>
          <StatusCell $w={9} $bare aria-label="Scale list"><Caret /></StatusCell>
          <StatusCell $w={20} aria-label="Workspace"><Icon size={12}><circle cx="8" cy="8" r="4.500" strokeWidth="3" /><path d="M8 0v3M8 13v3M0 8h3M13 8h3M2.500 2.500l2 2M11.500 11.500l2 2M13.500 2.500l-2 2M4.500 11.500l-2 2" strokeWidth="2.400" /></Icon></StatusCell>
          <StatusCell $w={9} $bare aria-label="Workspace list"><Caret /></StatusCell>
          <StatusCell $w={18} aria-label="Annotation monitor"><PlusIcon size={11} /></StatusCell>
          <StatusCell $w={18} aria-label="Units"><Icon size={12}><path d="M1 2h6v6H1zM8 9l4 6H5z" /><circle cx="12" cy="6" r="3" /></Icon></StatusCell>
          <StatusCell $w={16} aria-label="Quick properties"><Icon size={12}><path d="M4 1h11v10h-3v4H1v-3h3z" fill="#e6e0cd" stroke="none" /><circle cx="9" cy="6" r="2.500" fill="#e0a33c" stroke="none" /></Icon></StatusCell>
          <StatusCell $w={15} aria-label="Lock UI"><Icon size={12}><path d="M1 6h7v7H1z" fill="#e6b558" stroke="none" /><path d="M6 1h7v9H6z" fill="#7db8e0" stroke="none" /><path d="M8 12l3 3 5-6" stroke="#5fcf6f" strokeWidth="2" /></Icon></StatusCell>
          <StatusCell $w={20} aria-label="Graphics"><Icon size={12}><path d="M1 2h14v12H1z" fill="#d9dde4" stroke="none" /><path d="M2 10l4-4 3 4 5-6" stroke="#4b6a86" /><path d="M11 10h5v5h-5z" fill="#e08b4a" stroke="none" /></Icon></StatusCell>
          <StatusCell $w={22} aria-label="Clean screen"><Icon size={12}><path d="M1 2h14v12H1zM9 5h3v3M7 11H4V8" strokeWidth="1.600" /></Icon></StatusCell>
          <StatusCell $w={14} aria-label="Customization"><MenuIcon /></StatusCell>
        </StatusGroup>
      </StatusBar>

      <Player>
        <svg width="52" height="56" viewBox="0 0 52 56" aria-hidden="true">
          <path d="M0 50h52v4H2z" fill="#b80f2c" />
          <circle cx="25" cy="24" r="24" fill="#0b0c0f" />
          <path d="M6 34a22 22 0 0 0 16 11M12 38a18 18 0 0 0 12 5" stroke="#41454c" fill="none" />
          <path d="M5 18l7-2 1-6 5 4 3-5 2 6 6 1 1 4 8-3-3 6 8 1-5 3 3 4-5 1 3 5-7 0-3 4-5-5-6 2-1-5-7 1 3-5-7-2 6-2z" fill="#c01b34" stroke="#c98a5a" strokeWidth=".7" />
          <path d="M12 14l6 8-9 4 12 0 3 6 2-9 10-3-8-2-4-6M30 28l8 6M28 32l4 4M18 30l-5 4" stroke="#22070d" fill="none" strokeWidth="1.300" />
        </svg>
        <Track>
          <TrackHead><strong>Fresh</strong><span>Daft Punk</span></TrackHead>
          <TrackTime>
            <span>01:12</span>
            <svg width="64" height="8" viewBox="0 0 64 8" aria-hidden="true">
              <path d="M0 4h64" stroke="#8f1f30" strokeWidth="4" strokeDasharray="2 1" />
              <path d="M14 4h44" stroke="#a8162d" strokeWidth="7" strokeDasharray="2 1 1 1" />
            </svg>
            <span>04:04</span>
          </TrackTime>
        </Track>
      </Player>

      <PixCard>
        <strong>livepix.gg/itsmarol</strong>
        <QrBox><QrCode /></QrBox>
        <p>envie sua mensagem na<br />live via pix!</p>
      </PixCard>

      <Chat>
        {MESSAGES.map((m) => (
          <li key={m}><TwitchMark /><Nick>Fabrusk</Nick> : {m}</li>
        ))}
      </Chat>

      <Goal>
        <GoalLink href="#">livepix.gg/itsmarol</GoalLink>
        <GoalBar>
          Mês da strumer
          <svg width="11" height="11" viewBox="0 0 12 12" role="img" aria-label="cake">
            <path d="M3 1v3M6 1v3M9 1v3" stroke="#e8a04a" />
            <path d="M1 4h10v3H1z" fill="#f6d58c" />
            <path d="M0 7h12v4H0z" fill="#e79a3c" />
          </svg>
          (R$ 6,00/R$ 400,00)
        </GoalBar>
        <span>Termina em 26 dias</span>
      </Goal>
    </Page>
  );
}
